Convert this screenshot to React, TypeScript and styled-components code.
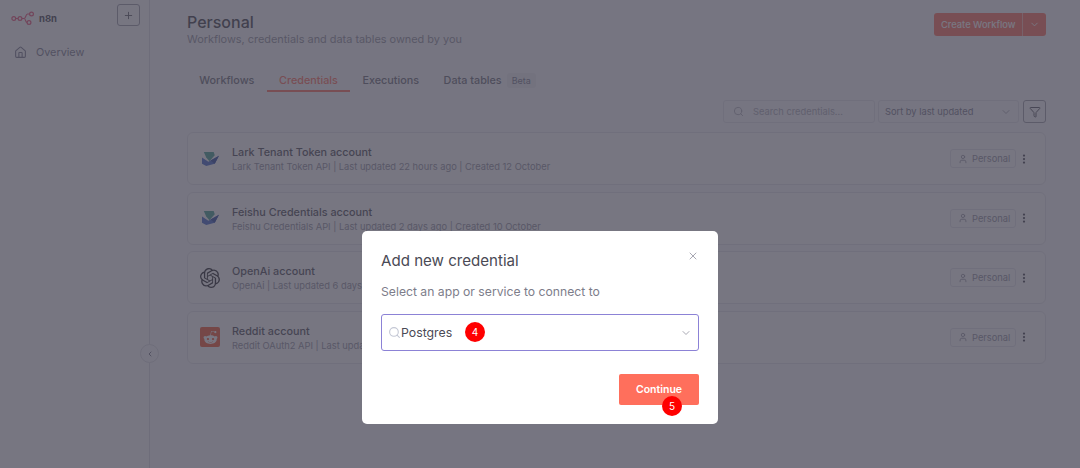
import React from 'react'
import styled, { createGlobalStyle } from 'styled-components'
import {
  ChevronDown,
  ChevronLeft,
  EllipsisVertical,
  Funnel,
  House,
  Plus,
  Search,
  User,
  X,
} from 'lucide-react'
import { FaRedditAlien } from 'react-icons/fa'
import { SiOpenai } from 'react-icons/si'

type Credential = {
  name: string
  meta: string
  icon: 'lark' | 'openai' | 'reddit'
}

const credentials: Credential[] = [
  {
    name: 'Lark Tenant Token account',
    meta: 'Lark Tenant Token API | Last updated 22 hours ago | Created 12 October',
    icon: 'lark',
  },
  {
    name: 'Feishu Credentials account',
    meta: 'Feishu Credentials API | Last updated 2 days ago | Created 10 October',
    icon: 'lark',
  },
  {
    name: 'OpenAi account',
    meta: 'OpenAi | Last updated 6 days ago | Created 6 October',
    icon: 'openai',
  },
  {
    name: 'Reddit account',
    meta: 'Reddit OAuth2 API | Last updated 6 days ago | Created 6 October',
    icon: 'reddit',
  },
]

const tabs = ['Workflows', 'Credentials', 'Executions', 'Data tables']

function N8nLogo() {
  return (
    <svg width="24" height="14" viewBox="0 0 24 14" fill="none" stroke="#ea4b71" strokeWidth="1.2">
      <circle cx="2.8" cy="7.5" r="1.9" />
      <circle cx="9" cy="7.5" r="1.9" />
      <circle cx="20.5" cy="3" r="1.9" />
      <circle cx="18" cy="11.5" r="1.9" />
      <path d="M4.7 7.5h2.4M10.9 7.5h2.3c1.6 0 1.5-4.5 3.3-4.5h2.1M13.2 7.5c1.4 0 1.2 4 2.9 4" />
    </svg>
  )
}

function LarkLogo() {
  return (
    <svg width="17" height="14" viewBox="0 0 16 13">
      <path d="M1.700 0H11l1 3-5 5.500L4 5z" fill="#3f9a8e" />
      <path d="M0 5.200 6 9l10-5.500L12 11l-8 2-4-2z" fill="#3f63c4" />
      <path d="M16 3.500 12 11 8 8z" fill="#27429a" />
    </svg>
  )
}

export default function App() {
  return (
    <Page>
      <GlobalStyle />
      <Sidebar>
        <SidebarTop>
          <Brand>
            <N8nLogo />
            <BrandName>n8n</BrandName>
          </Brand>
          <AddButton>
            <Plus size={11} />
          </AddButton>
        </SidebarTop>
        <NavItem>
          <House size={13} />
          <span>Overview</span>
        </NavItem>
      </Sidebar>
      <CollapseButton>
        <ChevronLeft size={8} strokeWidth={3} />
      </CollapseButton>

      <Main>
        <Header>
          <div>
            <Title>Personal</Title>
            <Subtitle>Workflows, credentials and data tables owned by you</Subtitle>
          </div>
          <SplitButton>
            <SplitLabel>Create Workflow</SplitLabel>
            <SplitArrow>
              <ChevronDown size={11} />
            </SplitArrow>
          </SplitButton>
        </Header>

        <Tabs>
          {tabs.map(tab => (
            <Tab key={tab} $active={tab === 'Credentials'}>
              {tab}
              {tab === 'Data tables' && <BetaTag>Beta</BetaTag>}
            </Tab>
          ))}
        </Tabs>

        <Toolbar>
          <SearchField>
            <Search size={11} />
            <span>Search credentials...</span>
          </SearchField>
          <SortField>
            <span>Sort by last updated</span>
            <ChevronDown size={12} />
          </SortField>
          <FilterButton>
            <Funnel size={12} />
          </FilterButton>
        </Toolbar>

        <CardList>
          {credentials.map(item => (
            <Card key={item.name}>
              <CardIcon>
                {item.icon === 'lark' && <LarkLogo />}
                {item.icon === 'openai' && <SiOpenai size={20} color="#1f1f24" />}
                {item.icon === 'reddit' && (
                  <RedditTile>
                    <FaRedditAlien size={15} color="#fff" />
                  </RedditTile>
                )}
              </CardIcon>
              <CardText>
                <CardName>{item.name}</CardName>
                <CardMeta>{item.meta}</CardMeta>
              </CardText>
              <OwnerTag>
                <User size={10} />
                Personal
              </OwnerTag>
              <MoreIcon>
                <EllipsisVertical size={12} strokeWidth={2.5} />
              </MoreIcon>
            </Card>
          ))}
        </CardList>
      </Main>

      <Overlay>
        <Modal>
          <CloseIcon>
            <X size={12} />
          </CloseIcon>
          <ModalTitle>Add new credential</ModalTitle>
          <ModalLabel>Select an app or service to connect to</ModalLabel>
          <SelectBox>
            <Search size={13} color="#c3c7d4" />
            <SelectValue>Postgres</SelectValue>
            <StepBadge $left={83} $top={7}>4</StepBadge>
            <SelectArrow>
              <ChevronDown size={12} />
            </SelectArrow>
          </SelectBox>
          <ModalFooter>
            <ContinueButton>
              Continue
              <StepBadge $left={43} $top={22}>5</StepBadge>
            </ContinueButton>
          </ModalFooter>
        </Modal>
      </Overlay>
    </Page>
  )
}

const GlobalStyle = createGlobalStyle`
  html, body {
    margin: 0;
    padding: 0;
    width: 1080px;
    height: 468px;
    overflow: hidden;
    font-family: Inter, 'Liberation Sans', sans-serif;
  }

  * {
    box-sizing: border-box;
  }
`

const Page = styled.div`
  position: relative;
  display: flex;
  width: 1080px;
  height: 468px;
  overflow: hidden;
  background: #f8f8fa;
  color: #555560;
`

const Sidebar = styled.aside`
  flex: 0 0 150px;
  border-right: 1px solid #dcdce3;
  background: #fafafb;
`

const SidebarTop = styled.div`
  display: flex;
  align-items: flex-start;
  justify-content: space-between;
  padding: 4px 9px 0 11px;
`

const Brand = styled.div`
  display: flex;
  align-items: center;
  gap: 4px;
  padding-top: 7px;
`

const BrandName = styled.span`
  font-size: 9.500px;
  font-weight: 700;
  color: #40404a;
`

const AddButton = styled.div`
  display: flex;
  align-items: center;
  justify-content: center;
  width: 23px;
  height: 22px;
  border: 1px solid #9a9aa6;
  border-radius: 3px;
`

const NavItem = styled.div`
  display: flex;
  align-items: center;
  gap: 9px;
  padding: 20px 0 0 14px;
  font-size: 10.800px;
  color: #77778a;
`

const CollapseButton = styled.div`
  position: absolute;
  left: 140px;
  top: 344px;
  display: flex;
  align-items: center;
  justify-content: center;
  width: 19px;
  height: 19px;
  border: 1px solid #dcdce3;
  border-radius: 50%;
  background: #f8f8fa;
  color: #77778a;
`

const Main = styled.main`
  flex: 1;
  padding: 13px 34px 0 37px;
`

const Header = styled.header`
  display: flex;
  align-items: flex-start;
  justify-content: space-between;
  height: 53px;
`

const Title = styled.h1`
  margin: 0;
  font-size: 16px;
  line-height: 19px;
  font-weight: 500;
  color: #3c3c46;
`

const Subtitle = styled.p`
  margin: 0;
  font-size: 10.900px;
  line-height: 15px;
  color: #8e8e9b;
`

const SplitButton = styled.div`
  display: flex;
  height: 23px;
  border-radius: 3px;
  overflow: hidden;
  color: #fff;
  background: #ff6d5a;
`

const SplitLabel = styled.div`
  display: flex;
  align-items: center;
  padding: 0 7px;
  width: 88px;
  font-size: 9.300px;
  font-weight: 500;
  white-space: nowrap;
`

const SplitArrow = styled.div`
  display: flex;
  align-items: center;
  justify-content: center;
  width: 24px;
  border-left: 1px solid #ffb3a8;
`

const Tabs = styled.nav`
  display: flex;
  height: 26px;
`

const Tab = styled.div<{ $active?: boolean }>`
  display: flex;
  align-items: center;
  gap: 5px;
  height: 26px;
  padding: 4px 12.300px 0;
  font-size: 10.800px;
  font-weight: 500;
  white-space: nowrap;
  color: ${p => (p.$active ? '#ff6d5a' : '#6a6a76')};
  border-bottom: 2px solid ${p => (p.$active ? '#ff6d5a' : 'transparent')};
`

const BetaTag = styled.span`
  padding: 2px 5px;
  border-radius: 3px;
  font-size: 9px;
  font-weight: 400;
  background: #ececf1;
  color: #77778a;
`

const Toolbar = styled.div`
  display: flex;
  justify-content: flex-end;
  gap: 3px;
  height: 23px;
  margin-top: 8px;
`

const SearchField = styled.div`
  display: flex;
  align-items: center;
  gap: 9px;
  width: 152px;
  padding-left: 9px;
  border: 1px solid #e3e3e9;
  border-radius: 3px;
  font-size: 9.300px;
  color: #aaaab6;
`

const SortField = styled.div`
  display: flex;
  align-items: center;
  justify-content: space-between;
  width: 141px;
  padding: 0 6px;
  border: 1px solid #e3e3e9;
  border-radius: 3px;
  font-size: 9.300px;
  color: #77778a;

  svg {
    color: #aaaab6;
  }
`

const FilterButton = styled.div`
  display: flex;
  align-items: center;
  justify-content: center;
  width: 23px;
  margin-left: 1px;
  border: 1px solid #9a9aa6;
  border-radius: 3px;
  color: #555560;
`

const CardList = styled.div`
  display: flex;
  flex-direction: column;
  gap: 6.500px;
  margin-top: 9px;
`

const Card = styled.article`
  display: flex;
  align-items: center;
  height: 53px;
  padding: 0 15px 0 12px;
  border: 1px solid #e3e3e9;
  border-radius: 6px;
  background: #fafafb;
`

const CardIcon = styled.div`
  display: flex;
  align-items: center;
  justify-content: center;
  flex: 0 0 20px;
  margin-right: 12px;
`

const RedditTile = styled.div`
  display: flex;
  align-items: center;
  justify-content: center;
  width: 20px;
  height: 20px;
  border-radius: 2px;
  background: #f2542d;
`

const CardText = styled.div`
  flex: 1;
  padding-top: 3px;
`

const CardName = styled.div`
  font-size: 10.800px;
  line-height: 14px;
  font-weight: 500;
  color: #4a4a55;
`

const CardMeta = styled.div`
  font-size: 9.300px;
  line-height: 14px;
  color: #8e8e9b;
`

const OwnerTag = styled.div`
  display: flex;
  align-items: center;
  gap: 4px;
  width: 66px;
  height: 19px;
  padding-left: 7px;
  border: 1px solid #e3e3e9;
  border-radius: 3px;
  font-size: 9.300px;
  color: #8e8e9b;
`

const MoreIcon = styled.div`
  display: flex;
  margin-left: 2px;
  color: #40404a;
`

const Overlay = styled.div`
  position: absolute;
  inset: 0;
  display: flex;
  justify-content: center;
  align-items: flex-start;
  padding-top: 231px;
  background: rgba(68, 66, 82, 0.72);
`

const Modal = styled.section`
  position: relative;
  width: 356px;
  height: 193px;
  padding: 20px 19px 0;
  border-radius: 5px;
  background: #fff;
`

const CloseIcon = styled.div`
  position: absolute;
  top: 19px;
  right: 19px;
  display: flex;
  color: #a8a8b3;
`

const ModalTitle = styled.h2`
  margin: 0;
  font-size: 15.100px;
  line-height: 20px;
  font-weight: 400;
  color: #4a4a55;
`

const ModalLabel = styled.p`
  margin: 13px 0 0;
  font-size: 12.200px;
  line-height: 16px;
  color: #7d7d8a;
`

const SelectBox = styled.div`
  position: relative;
  display: flex;
  align-items: center;
  height: 37px;
  margin-top: 14px;
  padding: 0 6px;
  border: 1px solid #8c82d6;
  border-radius: 3px;
`

const SelectValue = styled.span`
  font-size: 12.300px;
  color: #4a4a55;
`

const SelectArrow = styled.div`
  display: flex;
  margin-left: auto;
  color: #a8a8b3;
`

const StepBadge = styled.span<{ $left: number; $top: number }>`
  position: absolute;
  left: ${p => p.$left}px;
  top: ${p => p.$top}px;
  display: flex;
  align-items: center;
  justify-content: center;
  width: 20px;
  height: 20px;
  border-radius: 50%;
  background: #f00;
  font-size: 10px;
  font-weight: 400;
  color: #fff;
`

const ModalFooter = styled.div`
  display: flex;
  justify-content: flex-end;
  margin-top: 23px;
`

const ContinueButton = styled.div`
  position: relative;
  display: flex;
  align-items: center;
  justify-content: center;
  width: 80px;
  height: 31px;
  border-radius: 2px;
  background: #ff6f5c;
  font-size: 10.500px;
  font-weight: 600;
  color: #fff;
`
